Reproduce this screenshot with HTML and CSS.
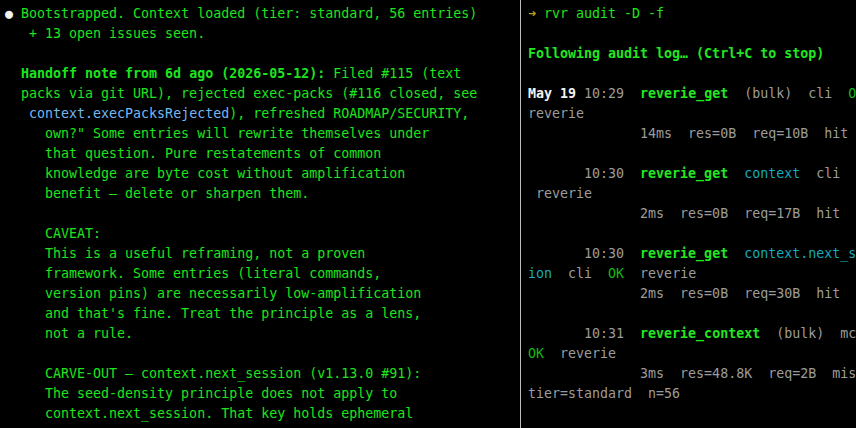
FILE: index.html
```html
<!DOCTYPE html>
<html lang="en">
<head>
<meta charset="utf-8">
<title>Terminal</title>
<link rel="stylesheet" href="styles.css">
</head>
<body>
<div class="screen">
  <div class="pane left">
    <div class="ln"><span class="dot">●</span> Bootstrapped. Context loaded (tier: standard, 56 entries)</div>
    <div class="ln">   + 13 open issues seen.</div>
    <div class="ln"></div>
    <div class="ln">  <b>Handoff note from 6d ago (2026-05-12):</b> Filed #115 (text</div>
    <div class="ln">  packs via git URL), rejected exec-packs (#116 closed, see</div>
    <div class="ln">   <span class="code">context.execPacksRejected</span>), refreshed ROADMAP/SECURITY,</div>
    <div class="ln">     own?" Some entries will rewrite themselves under</div>
    <div class="ln">     that question. Pure restatements of common</div>
    <div class="ln">     knowledge are byte cost without amplification</div>
    <div class="ln">     benefit — delete or sharpen them.</div>
    <div class="ln"></div>
    <div class="ln">     CAVEAT:</div>
    <div class="ln">     This is a useful reframing, not a proven</div>
    <div class="ln">     framework. Some entries (literal commands,</div>
    <div class="ln">     version pins) are necessarily low-amplification</div>
    <div class="ln">     and that's fine. Treat the principle as a lens,</div>
    <div class="ln">     not a rule.</div>
    <div class="ln"></div>
    <div class="ln">     CARVE-OUT — context.next_session (v1.13.0 #91):</div>
    <div class="ln">     The seed-density principle does not apply to</div>
    <div class="ln">     context.next_session. That key holds ephemeral</div>
  </div>
  <div class="divider"></div>
  <div class="pane right">
    <div class="ln"><span class="arrow">➜</span> <span class="cmd">rvr audit -D -f</span></div>
    <div class="ln"></div>
    <div class="ln"><b class="hl">Following audit log… (Ctrl+C to stop)</b></div>
    <div class="ln"></div>
    <div class="ln"><b class="date">May 19</b> 10:29  <b class="hl">reverie_get</b>  (bulk)  cli  <span class="ok">OK</span></div>
    <div class="ln">reverie</div>
    <div class="ln">              14ms  res=0B  req=10B  hit</div>
    <div class="ln"></div>
    <div class="ln">       10:30  <b class="hl">reverie_get</b>  <span class="key">context</span>  cli  <span class="ok">OK</span></div>
    <div class="ln"> reverie</div>
    <div class="ln">              2ms  res=0B  req=17B  hit</div>
    <div class="ln"></div>
    <div class="ln">       10:30  <b class="hl">reverie_get</b>  <span class="key">context.next_sess</span></div>
    <div class="ln"><span class="key">ion</span>  cli  <span class="ok">OK</span>  reverie</div>
    <div class="ln">              2ms  res=0B  req=30B  hit</div>
    <div class="ln"></div>
    <div class="ln">       10:31  <b class="hl">reverie_context</b>  (bulk)  mcp</div>
    <div class="ln"><span class="ok">OK</span>  reverie</div>
    <div class="ln">              3ms  res=48.8K  req=2B  miss</div>
    <div class="ln">tier=standard  n=56</div>
    <div class="ln"></div>
  </div>
</div>
</body>
</html>
```
FILE: styles.css
```css
html, body {
  margin: 0;
  padding: 0;
  background: #000;
}

.screen {
  display: flex;
  width: 856px;
  height: 428px;
  overflow: hidden;
  background: #000;
  font-family: "DejaVu Sans Mono", "Liberation Mono", monospace;
  font-size: 13.3px;
  line-height: 20px;
}

.pane {
  padding-top: 4px;
  overflow: hidden;
}

.ln {
  height: 20px;
  white-space: pre;
}

.left {
  width: 515px;
  padding-left: 5px;
  color: #1de41d;
}

.left b {
  font-weight: bold;
}

.dot {
  color: #f2f2f2;
}

.code {
  color: #74b8f0;
}

.divider {
  width: 1px;
  flex: none;
  background: #bdbdbd;
}

.right {
  flex: 1;
  padding-left: 7px;
  color: #9c9c9c;
}

.arrow {
  color: #b9a21a;
}

.cmd {
  color: #1de41d;
}

.hl {
  color: #22e622;
  font-weight: bold;
}

.date {
  color: #f2f2f2;
  font-weight: bold;
}

.ok {
  color: #16b816;
}

.key {
  color: #16aabb;
}
```
